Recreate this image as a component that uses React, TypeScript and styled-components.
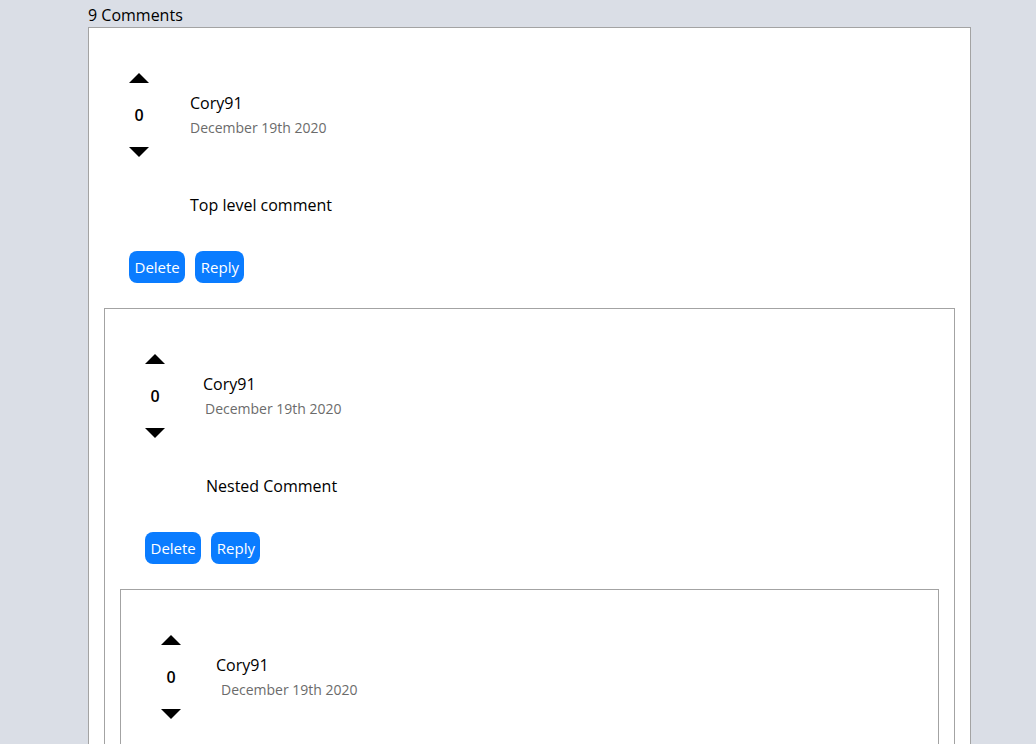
import React from 'react';
import styled, {createGlobalStyle} from "styled-components";

type CommentData = {
    id: number;
    author: string;
    date: string;
    text: string;
    score: number;
    replies: CommentData[];
}

const comments: CommentData[] = [
    {
        id: 1, author: "Cory91", date: "December 19th 2020", text: "Top level comment", score: 0,
        replies: [
            {
                id: 2, author: "Cory91", date: "December 19th 2020", text: "Nested Comment", score: 0,
                replies: [
                    {id: 3, author: "Cory91", date: "December 19th 2020", text: "Nested Comment", score: 0, replies: []},
                ],
            },
        ],
    },
];

// the name and date drift a few px per level in the original
const nameOffset = [41, 38, 35];
const dateOffset = [0, 2, 5];

function Comment({comment, depth}: { comment: CommentData, depth: number }) {
    return (
        <Box>
            <Inner>
                <Header>
                    <Votes>
                        <Arrow aria-label="upvote"/>
                        <Score>{comment.score}</Score>
                        <Arrow aria-label="downvote" $down/>
                    </Votes>
                    <Meta $offset={nameOffset[depth] ?? 35}>
                        <Author>{comment.author}</Author>
                        <DateText $shift={dateOffset[depth] ?? 5}>{comment.date}</DateText>
                    </Meta>
                </Header>
                <Body>{comment.text}</Body>
                <Actions>
                    <ActionButton>Delete</ActionButton>
                    <ActionButton>Reply</ActionButton>
                </Actions>
            </Inner>
            {comment.replies.map((reply) => (
                <Comment key={reply.id} comment={reply} depth={depth + 1}/>
            ))}
        </Box>
    )
}

function App() {
    return (
        <Page>
            <GlobalStyle/>
            <Container>
                <Heading>9 Comments</Heading>
                {comments.map((c) => (
                    <Comment key={c.id} comment={c} depth={0}/>
                ))}
            </Container>
        </Page>
    )
}

export default App;

const GlobalStyle = createGlobalStyle`
  html, body {
    margin: 0;
    background: #dadee6;
    font-family: "Open Sans", "Noto Sans", sans-serif;
    color: #000;
  }
`
const Page = styled.div`
  padding: 4px 0 0 88px;
  min-height: 744px;
  box-sizing: border-box;
`
const Container = styled.div`
  width: 883px;
`
const Heading = styled.div`
  font-size: 16px;
  line-height: 22px;
  margin-bottom: 1px;
`
const Box = styled.div`
  background: #fff;
  border: 1px solid #a3a3a3;
  padding: 0 15px 25px;
`
const Inner = styled.div`
  padding: 45px 0 25px 25px;
`
const Header = styled.div`
  display: flex;
  align-items: center;
`
const Votes = styled.div`
  display: flex;
  flex-direction: column;
  align-items: center;
  gap: 21px;
  width: 20px;
`
const Arrow = styled.span<{ $down?: boolean }>`
  width: 0;
  height: 0;
  border-left: 10px solid transparent;
  border-right: 10px solid transparent;
  ${p => p.$down ? "border-top: 10px solid #000;" : "border-bottom: 10px solid #000;"}
  cursor: pointer;
`
const Score = styled.div`
  font-size: 16px;
  line-height: 22px;
  font-weight: 600;
`
const Meta = styled.div<{ $offset: number }>`
  margin-left: ${p => p.$offset}px;
  margin-bottom: 2px;
  display: flex;
  flex-direction: column;
  gap: 4px;
`
const Author = styled.div`
  font-size: 16px;
  line-height: 22px;
  font-weight: 500;
`
const DateText = styled.div<{ $shift: number }>`
  font-size: 14px;
  line-height: 19px;
  color: #6b6b6b;
  margin-left: ${p => p.$shift}px;
`
const Body = styled.p`
  margin: 37px 0 0 61px;
  font-size: 16px;
  line-height: 22px;
`
const Actions = styled.div`
  display: flex;
  gap: 10px;
  margin-top: 35px;
`
const ActionButton = styled.button`
  height: 32px;
  padding: 0 5.5px;
  border: none;
  border-radius: 8px;
  background: #0a7cff;
  color: #fff;
  font-family: "Open Sans", "Noto Sans", sans-serif;
  font-size: 15px;
  cursor: pointer;
`
